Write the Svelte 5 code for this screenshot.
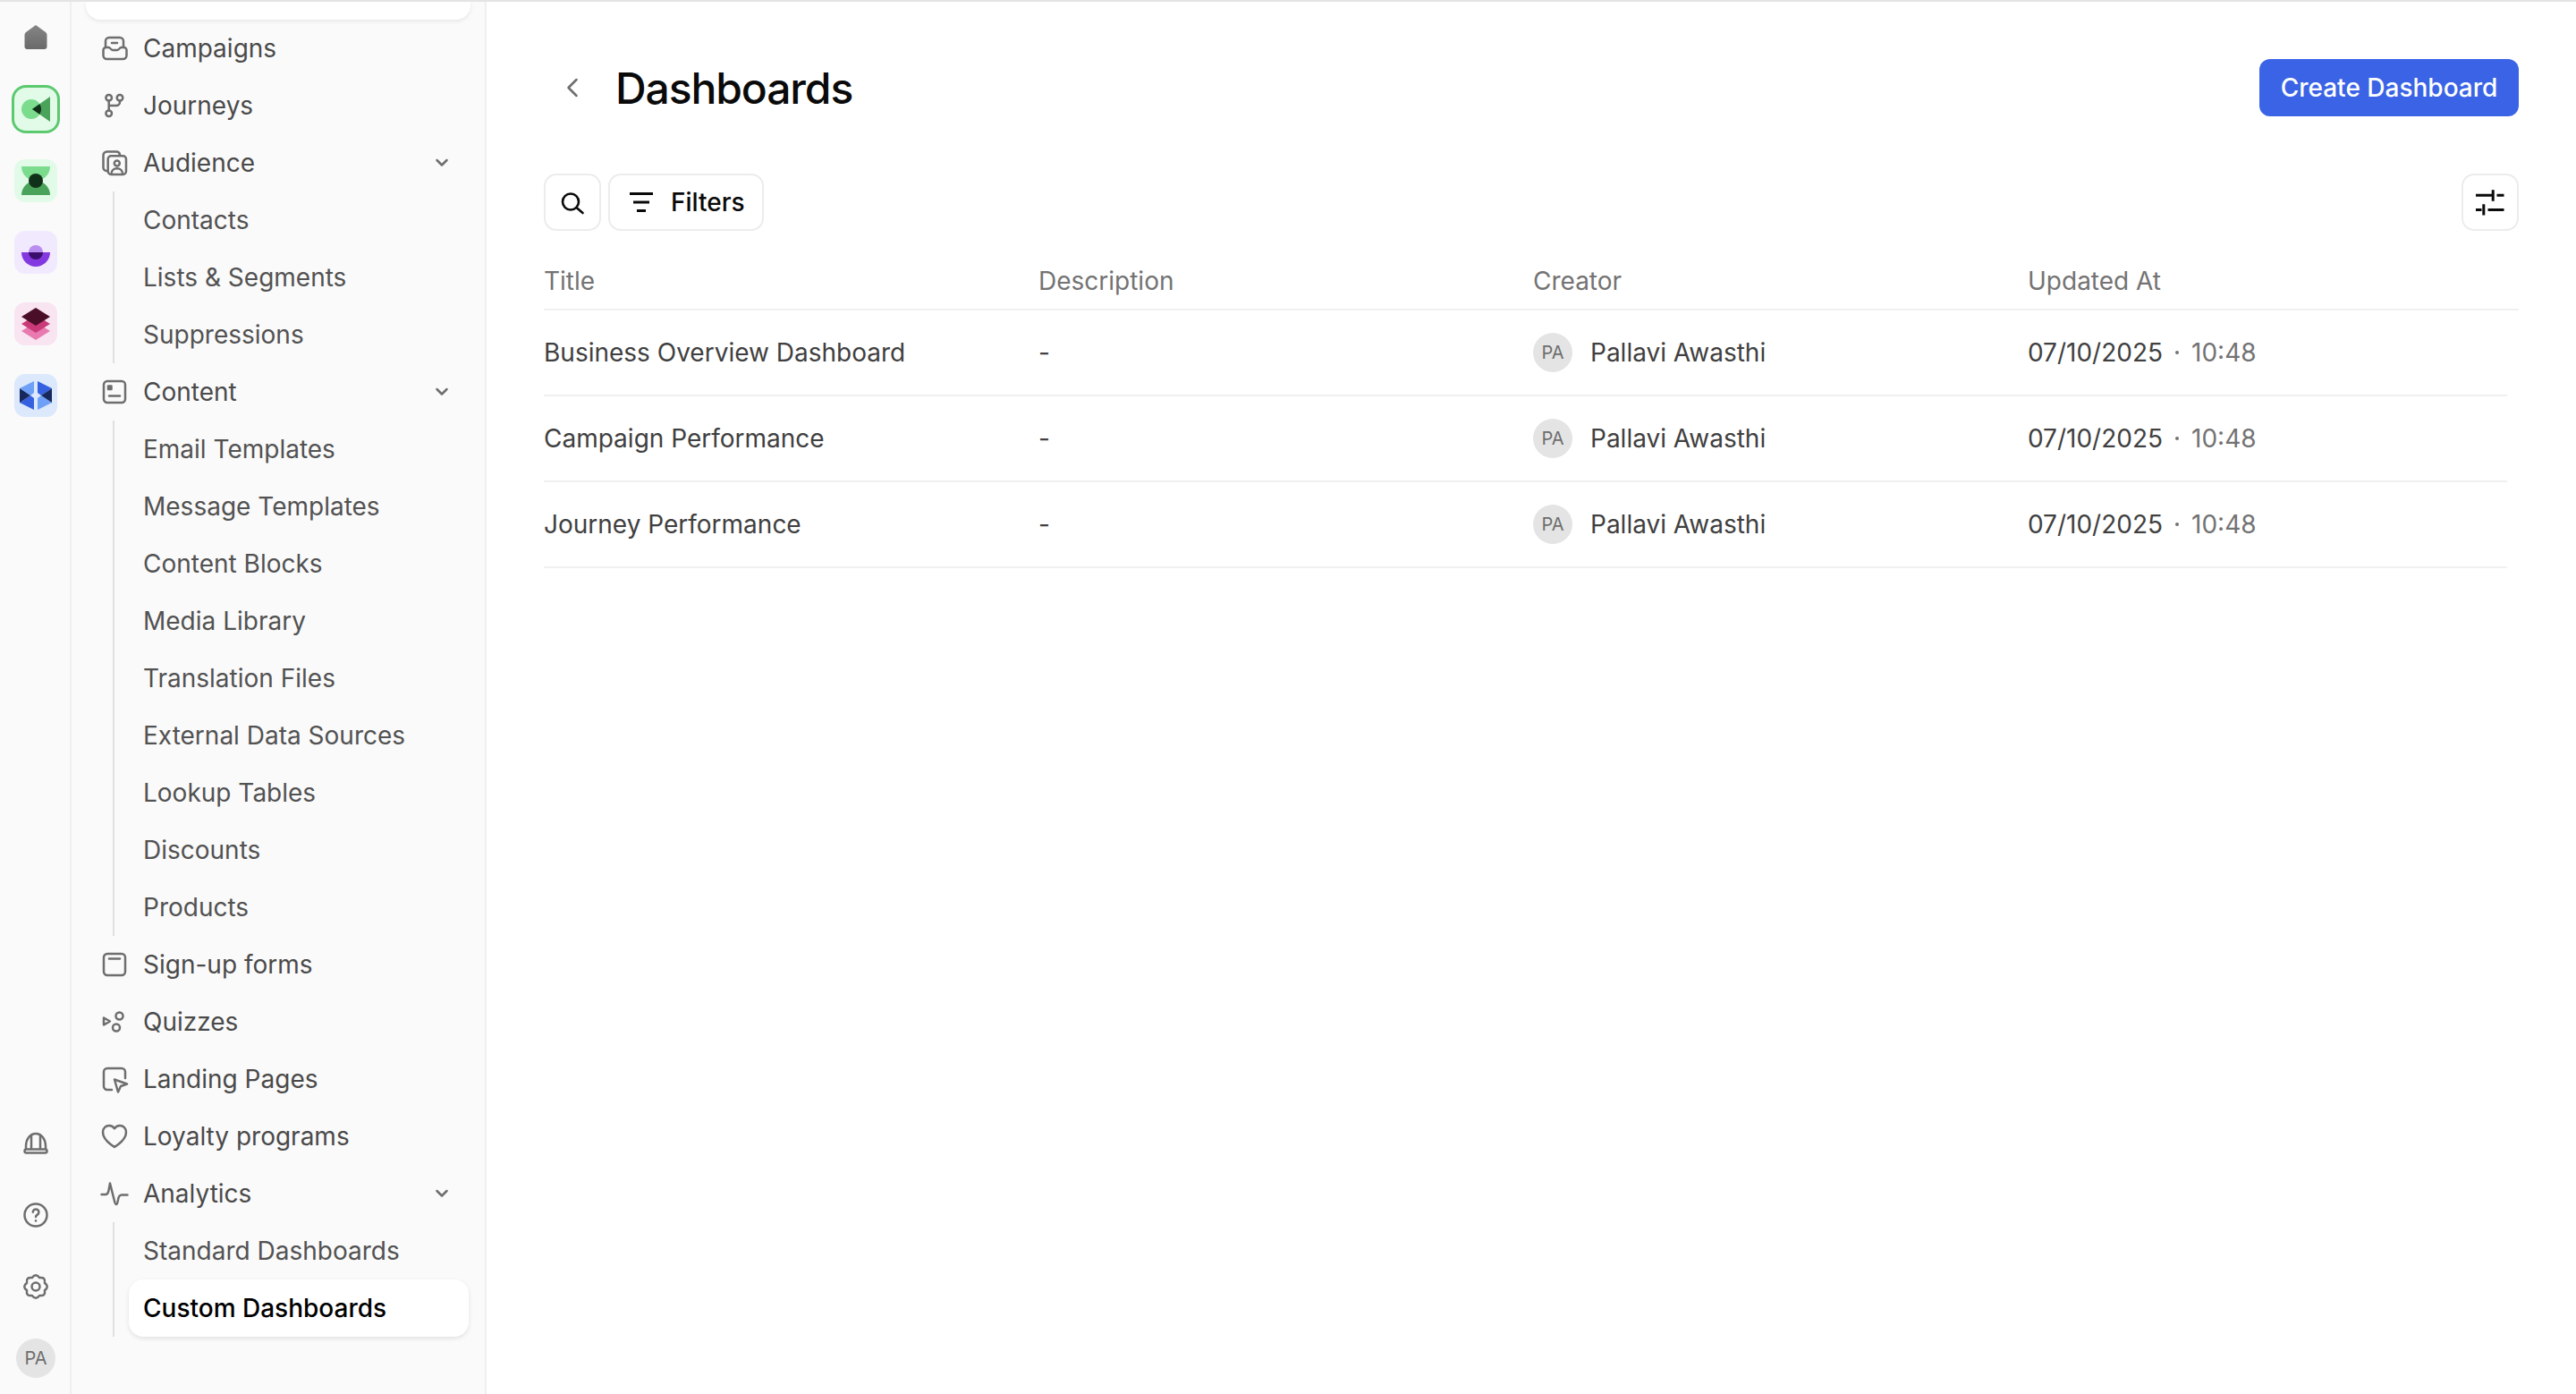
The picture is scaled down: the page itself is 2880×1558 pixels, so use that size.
<script>
  // 8-tooth cog outline, centred in the 32 box
  const gearPath = () => {
    const pt = (r, a) => `${(16 + r * Math.cos(a)).toFixed(2)} ${(16 + r * Math.sin(a)).toFixed(2)}`;
    const step = Math.PI / 4;
    let d = `M${pt(10.8, -Math.PI / 2 - step / 2)}`;
    for (let i = 0; i < 8; i++) {
      const a = -Math.PI / 2 - step / 2 + i * step;
      d += `Q${pt(15.6, a + step / 2)} ${pt(10.8, a + step)}`;
    }
    return d + 'Z';
  };

  const icons = {
    campaigns: '<path d="M6 14.500V8a4 4 0 0 1 4-4h12a4 4 0 0 1 4 4v6.500"/><path d="M13 10h6"/><path d="M3.500 18a3 3 0 0 1 3-3h3c2 0 2 3 4.500 3h5c2.500 0 2.500-3 4.500-3h3a3 3 0 0 1 3 3v6a4 4 0 0 1-4 4h-18a4 4 0 0 1-4-4z"/>',
    journeys: '<circle cx="9.700" cy="7.300" r="3.300"/><circle cx="22" cy="7.300" r="3.300"/><circle cx="9.700" cy="24.700" r="3.300"/><path d="M9.700 10.800v10.500M22 10.800v1.300a4 4 0 0 1-4 4H9.700"/>',
    audience: '<path d="M7 25a3.500 3.500 0 0 1-3.500-3.500V7.500a4 4 0 0 1 4-4h10.500a4 4 0 0 1 4 3.500"/><rect x="8.700" y="8.300" width="20.300" height="20.700" rx="3.500"/><circle cx="18.800" cy="16.500" r="3"/><path d="M12.500 28.500c0-3.800 2.800-6.200 6.300-6.200s6.300 2.400 6.300 6.200"/>',
    content: '<rect x="4" y="4" width="24" height="24" rx="4"/><rect x="9" y="9.500" width="3.500" height="3.500" fill="#6e6e6e"/><path d="M10 20.500h12"/>',
    signup: '<rect x="4" y="4" width="24" height="24" rx="4"/><path d="M10 9.500h12"/>',
    quizzes: '<path d="M4 11.500l7 4-7 4z"/><circle cx="21.500" cy="9.500" r="4"/><circle cx="18" cy="22.500" r="4"/>',
    landing: '<path d="M13 28H8a4 4 0 0 1-4-4V8a4 4 0 0 1 4-4h16a4 4 0 0 1 4 4v7"/><path d="M16 16.500l14 5-7 2.500-3 6.500z"/>',
    loyalty: '<path d="M16 28C9 23.500 3 18.500 3 11.500 3 6.500 6.500 4 10 4c2.800 0 4.800 1.300 6 3.300C17.200 5.300 19.200 4 22 4c3.500 0 7 2.500 7 7.500 0 7-6 12-13 16.500z"/>',
    analytics: '<path d="M1.500 17H6c2.500 0 3-2 3.500-4.500L11 4.500l5 20c.5 2 1 3.500 2 3.500s1.500-2 2-5c.5-3.500 1.500-5.500 4-5.500h6.500"/>',
    helmet: '<path d="M5 22v-3C5 11 10 5 16 5s11 6 11 14v3"/><path d="M11 22V7M21 22V7"/><rect x="3.500" y="22.500" width="25" height="4" rx="2"/>',
    help: '<circle cx="16" cy="16" r="12.500"/><path d="M12.800 12.800a3.300 3.300 0 1 1 5 2.800c-1.200.7-1.800 1.300-1.800 2.400"/><path d="M16 22.200v.3"/>',
    gear: `<circle cx="16" cy="16" r="4.500"/><path d="${gearPath()}"/>`
  };

  const nav = [
    { label: 'Campaigns', icon: 'campaigns' },
    { label: 'Journeys', icon: 'journeys' },
    { label: 'Audience', icon: 'audience', children: ['Contacts', 'Lists & Segments', 'Suppressions'] },
    { label: 'Content', icon: 'content', children: ['Email Templates', 'Message Templates', 'Content Blocks', 'Media Library', 'Translation Files', 'External Data Sources', 'Lookup Tables', 'Discounts', 'Products'] },
    { label: 'Sign-up forms', icon: 'signup' },
    { label: 'Quizzes', icon: 'quizzes' },
    { label: 'Landing Pages', icon: 'landing' },
    { label: 'Loyalty programs', icon: 'loyalty' },
    { label: 'Analytics', icon: 'analytics', children: ['Standard Dashboards', 'Custom Dashboards'] }
  ];

  const rows = ['Business Overview Dashboard', 'Campaign Performance', 'Journey Performance'];
</script>

<div class="page">
  <aside class="rail">
    <svg class="home" viewBox="0 0 26 27"><defs><linearGradient id="homeg" x1="0" y1="0" x2="0" y2="1"><stop offset="0" stop-color="#858585"/><stop offset="1" stop-color="#6a6a6a"/></linearGradient></defs><path d="M13 0l11 8a4 4 0 0 1 1.500 3v13a3 3 0 0 1-3 3h-19a3 3 0 0 1-3-3V11a4 4 0 0 1 1.500-3z" fill="url(#homeg)"/></svg>

    <div class="apps">
      <div class="app active">
        <svg viewBox="0 0 48 48"><circle cx="19" cy="24" r="11" fill="#7bdc8d"/><path d="M40 10v28L20 24z" fill="#4aa35a"/><path d="M20 24l8.300-5.800a11 11 0 0 1 0 11.600z" fill="#10301a"/></svg>
      </div>
      <div class="app green">
        <svg viewBox="0 0 48 48"><path d="M8 8h32a16 16 0 0 1-32 0z" fill="#7bdc8d"/><path d="M8 40a16 16 0 0 1 32 0z" fill="#4aa35a"/><circle cx="24" cy="24" r="8" fill="#10301a"/></svg>
      </div>
      <div class="app purple">
        <svg viewBox="0 0 48 48"><path d="M8 24h32a16 16 0 0 1-32 0z" fill="#8338e0"/><path d="M16 24a8 8 0 0 1 16 0z" fill="#b98cf0"/><path d="M16 24h16a8 8 0 0 1-16 0z" fill="#3a0f6b"/></svg>
      </div>
      <div class="app pink">
        <svg viewBox="0 0 48 48"><path d="M8 32l16-10 16 10-16 10z" fill="#e87ab0"/><path d="M8 24l16-10 16 10-16 10z" fill="#c93a78"/><path d="M8 16L24 6l16 10-16 10z" fill="#4a0e29"/></svg>
      </div>
      <div class="app blue">
        <svg viewBox="0 0 48 48"><path d="M22 8L6 16l12 8 4-3z" fill="#6ea0f8"/><path d="M6 32l12-8 4 3v13z" fill="#3560e0"/><path d="M26 8l16 8-12 8-4-3z" fill="#3560e0"/><path d="M42 32l-12-8-4 3v13z" fill="#6ea0f8"/><path d="M6 16v16l12-8z" fill="#17295c"/><path d="M42 16v16l-12-8z" fill="#17295c"/></svg>
      </div>
    </div>

    <div class="rail-bottom">
      <svg class="ico" viewBox="0 0 32 32">{@html icons.helmet}</svg>
      <svg class="ico" viewBox="0 0 32 32">{@html icons.help}</svg>
      <svg class="ico" viewBox="0 0 32 32">{@html icons.gear}</svg>
      <div class="avatar">PA</div>
    </div>
  </aside>

  <nav class="sidebar">
    <div class="stub"></div>
    {#each nav as item}
      <div class="item">
        <span class="item-ico"><svg class="ico" viewBox="0 0 32 32">{@html icons[item.icon]}</svg></span>
        <span class="item-label">{item.label}</span>
        {#if item.children}
          <svg class="chev" viewBox="0 0 16 16"><path d="M2.500 5l5.500 5.500L13.500 5"/></svg>
        {/if}
      </div>
      {#if item.children}
        <div class="children">
          {#each item.children as child}
            <div class="child" class:selected={child === 'Custom Dashboards'}>{child}</div>
          {/each}
        </div>
      {/if}
    {/each}
  </nav>

  <main class="main">
    <header class="head">
      <svg class="back" viewBox="0 0 16 24"><path d="M12.500 3l-9 9 9 9"/></svg>
      <h1>Dashboards</h1>
      <button class="create">Create Dashboard</button>
    </header>

    <div class="toolbar">
      <button class="tool square search">
        <svg viewBox="0 0 28 28"><circle cx="12" cy="13.500" r="9"/><path d="M18.500 20l7 6"/></svg>
      </button>
      <button class="tool filters">
        <svg viewBox="0 0 26 24"><path d="M0 2.500h26M4 12h18M8 21.500h10"/></svg>
        Filters
      </button>
      <button class="tool square settings">
        <svg viewBox="0 0 32 32"><path d="M0 8.200h18M23.500 8.200h8M0 24.500h6.500M13.500 24.500h18M19.200 2.200v12.600M8.800 18.200v12.300"/></svg>
      </button>
    </div>

    <div class="thead">
      <div>Title</div>
      <div>Description</div>
      <div>Creator</div>
      <div>Updated At</div>
    </div>

    {#each rows as title}
      <div class="row">
        <div>{title}</div>
        <div>-</div>
        <div class="creator"><span class="avatar small">PA</span>Pallavi Awasthi</div>
        <div class="updated">07/10/2025<span class="dot"></span><span class="time">10:48</span></div>
      </div>
    {/each}
  </main>
</div>

<style>
  :global(body) {
    margin: 0;
    background: #fff;
  }
  .page {
    display: flex;
    height: 1558px;
    overflow: hidden;
    box-sizing: border-box;
    border-top: 2px solid #e4e4e4;
    font-family: Inter, "Liberation Sans", sans-serif;
    font-size: 28px;
    color: #525252;
  }
  .rail {
    width: 80px;
    flex: none;
    box-sizing: border-box;
    background: #fafafa;
    border-right: 2px solid #efefef;
    display: flex;
    flex-direction: column;
    align-items: center;
    padding-top: 26px;
  }
  .home {
    width: 26px;
    height: 27px;
    margin-left: 2px;
  }
  .apps {
    margin-top: 43px;
    display: flex;
    flex-direction: column;
    align-items: center;
    gap: 32px;
    margin-left: 2px;
  }
  .app {
    width: 48px;
    height: 48px;
    border-radius: 12px;
  }
  .app svg {
    display: block;
    width: 48px;
    height: 48px;
  }
  .app.active {
    background: #e2fbe8;
    box-shadow: 0 0 0 3px #5cc96f;
    border-radius: 13px;
  }
  .green { background: #e2fbe8; }
  .purple { background: #f1eafe; }
  .pink { background: #f9e4f1; }
  .blue { background: #dce8fc; }
  .rail-bottom {
    margin-top: auto;
    margin-left: 2px;
    padding-bottom: 18px;
    display: flex;
    flex-direction: column;
    align-items: center;
    gap: 48px;
  }
  .ico {
    width: 32px;
    height: 32px;
    display: block;
    fill: none;
    stroke: #6e6e6e;
    stroke-width: 2.5;
    stroke-linecap: round;
    stroke-linejoin: round;
  }
  .avatar {
    width: 44px;
    height: 44px;
    border-radius: 50%;
    background: #e4e4e4;
    color: #6e6e6e;
    font-size: 20px;
    display: flex;
    align-items: center;
    justify-content: center;
    margin-top: -6px;
  }
  .sidebar {
    width: 464px;
    flex: none;
    box-sizing: border-box;
    background: #fafafa;
    border-right: 2px solid #efefef;
    padding: 0 16px;
  }
  .stub {
    height: 20px;
    background: #fff;
    border-radius: 0 0 16px 16px;
    box-shadow: 0 2px 4px rgba(0, 0, 0, 0.08);
  }
  .item {
    height: 64px;
    display: flex;
    align-items: center;
  }
  .item-ico {
    width: 32px;
    margin-left: 16px;
    margin-right: 16px;
    display: flex;
    justify-content: center;
  }
  .item-label {
    flex: 1;
    color: #4a4a4a;
  }
  .chev {
    width: 16px;
    height: 16px;
    margin-right: 24px;
    fill: none;
    stroke: #6e6e6e;
    stroke-width: 2.5;
    stroke-linecap: round;
    stroke-linejoin: round;
  }
  .children {
    margin-left: 30px;
    border-left: 2px solid #e0e0e0;
  }
  .child {
    height: 64px;
    line-height: 64px;
    padding-left: 16px;
    margin-left: 16px;
    margin-right: 2px;
    border-radius: 16px;
  }
  .child.selected {
    background: #fff;
    color: #000;
    font-weight: 500;
    box-shadow: 0 2px 5px rgba(0, 0, 0, 0.1);
  }
  .main {
    flex: 1;
    min-width: 0;
    box-sizing: border-box;
    padding: 64px 64px 0 64px;
    background: #fff;
  }
  .head {
    display: flex;
    align-items: center;
    height: 64px;
  }
  .back {
    width: 16px;
    height: 24px;
    margin-left: 24px;
    margin-right: 40px;
    fill: none;
    stroke: #6e6e6e;
    stroke-width: 2.5;
    stroke-linecap: round;
    stroke-linejoin: round;
  }
  h1 {
    margin: 0;
    flex: 1;
    font-size: 48px;
    font-weight: 500;
    letter-spacing: -1.1px;
    color: #0a0a0a;
  }
  button {
    font-family: inherit;
    font-size: 28px;
    font-weight: 500;
    cursor: pointer;
  }
  .create {
    width: 290px;
    height: 64px;
    border: none;
    border-radius: 12px;
    background: #3b63e6;
    color: #fff;
  }
  .toolbar {
    margin-top: 64px;
    display: flex;
    gap: 8px;
  }
  .tool {
    height: 64px;
    box-sizing: border-box;
    background: #fff;
    border: 2px solid #ececec;
    border-radius: 14px;
    color: #0a0a0a;
    display: flex;
    align-items: center;
    justify-content: center;
    padding: 0;
  }
  .tool svg {
    fill: none;
    stroke: #0a0a0a;
    stroke-width: 3;
  }
  .square {
    width: 64px;
  }
  .search svg {
    width: 28px;
    height: 28px;
    stroke-width: 2.6;
    stroke-linecap: round;
  }
  .filters {
    width: 174px;
    justify-content: flex-start;
    padding-left: 22px;
    gap: 20px;
  }
  .filters svg {
    width: 26px;
    height: 24px;
  }
  .settings {
    margin-left: auto;
  }
  .settings svg {
    width: 32px;
    height: 32px;
  }
  .thead,
  .row {
    display: grid;
    grid-template-columns: 553px 553px 553px minmax(0, 1fr);
    align-items: center;
  }
  .thead {
    height: 63px;
    margin-top: 24px;
    border-bottom: 2px solid #f0f0f0;
    color: #737373;
  }
  .row {
    height: 94px;
    border-bottom: 2px solid #f0f0f0;
    margin-right: 13px;
    color: #404040;
  }
  .creator {
    display: flex;
    align-items: center;
    gap: 20px;
  }
  .avatar.small {
    margin-top: 0;
  }
  .updated {
    display: flex;
    align-items: center;
  }
  .dot {
    width: 4px;
    height: 4px;
    border-radius: 50%;
    background: #737373;
    margin: 0 14px;
  }
  .time {
    color: #737373;
  }
</style>
